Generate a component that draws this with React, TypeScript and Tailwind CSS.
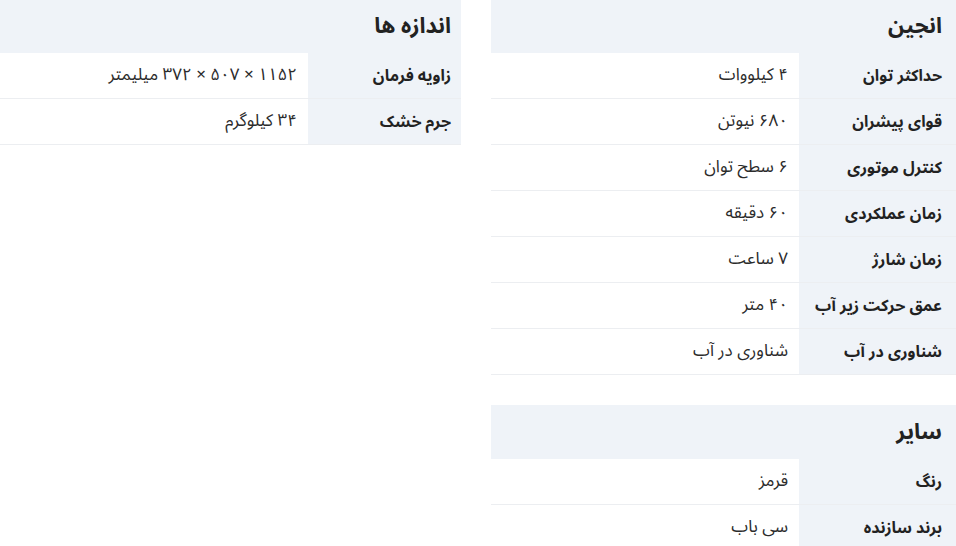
import React from 'react';

interface Spec {
  label: string;
  value: string;
}

interface SpecTableProps {
  title: string;
  rows: Spec[];
  labelWidth: string;
  inset: string;
}

const engine: Spec[] = [
  { label: 'حداکثر توان', value: '۴ کیلووات' },
  { label: 'قوای پیشران', value: '۶۸۰ نیوتن' },
  { label: 'کنترل موتوری', value: '۶ سطح توان' },
  { label: 'زمان عملکردی', value: '۶۰ دقیقه' },
  { label: 'زمان شارژ', value: '۷ ساعت' },
  { label: 'عمق حرکت زیر آب', value: '۴۰ متر' },
  { label: 'شناوری در آب', value: 'شناوری در آب' },
];

const other: Spec[] = [
  { label: 'رنگ', value: 'قرمز' },
  { label: 'برند سازنده', value: 'سی باب' },
];

const dimensions: Spec[] = [
  { label: 'زاویه فرمان', value: '۱۱۵۲ × ۵۰۷ × ۳۷۲ میلیمتر' },
  { label: 'جرم خشک', value: '۳۴ کیلوگرم' },
];

function SpecTable({ title, rows, labelWidth, inset }: SpecTableProps) {
  return (
    <div className="w-full">
      <div className={`h-[54px] bg-[#eff3f8] flex items-center ${inset} pt-[1px]`}>
        <h3 className="text-[22px] font-bold text-[#222]">{title}</h3>
      </div>
      {rows.map((row) => (
        <div key={row.label} className="flex h-[46px] border-b border-[#eceef1]">
          <div
            className={`${labelWidth} ${inset} shrink-0 bg-[#eff3f8] flex items-center text-[16px] font-bold text-[#222]`}
          >
            {row.label}
          </div>
          <div className="flex-1 flex items-center pr-[11px] text-[17px] text-[#2b2b2b]">
            {row.value}
          </div>
        </div>
      ))}
    </div>
  );
}

export default function App() {
  return (
    <div
      dir="rtl"
      className="w-[956px] h-[546px] overflow-hidden bg-white font-['Noto_Sans_Arabic','DejaVu_Sans',sans-serif]"
    >
      <div className="flex gap-[30px] mt-[-1px]">
        {/* Right column */}
        <div className="w-[465px] shrink-0 flex flex-col gap-[30px]">
          <SpecTable title="انجین" rows={engine} labelWidth="w-[157px]" inset="pr-[14px]" />
          <SpecTable title="سایر" rows={other} labelWidth="w-[157px]" inset="pr-[14px]" />
        </div>
        {/* Left column */}
        <div className="w-[461px] shrink-0">
          <SpecTable title="اندازه ها" rows={dimensions} labelWidth="w-[153px]" inset="pr-[10px]" />
        </div>
      </div>
    </div>
  );
}
